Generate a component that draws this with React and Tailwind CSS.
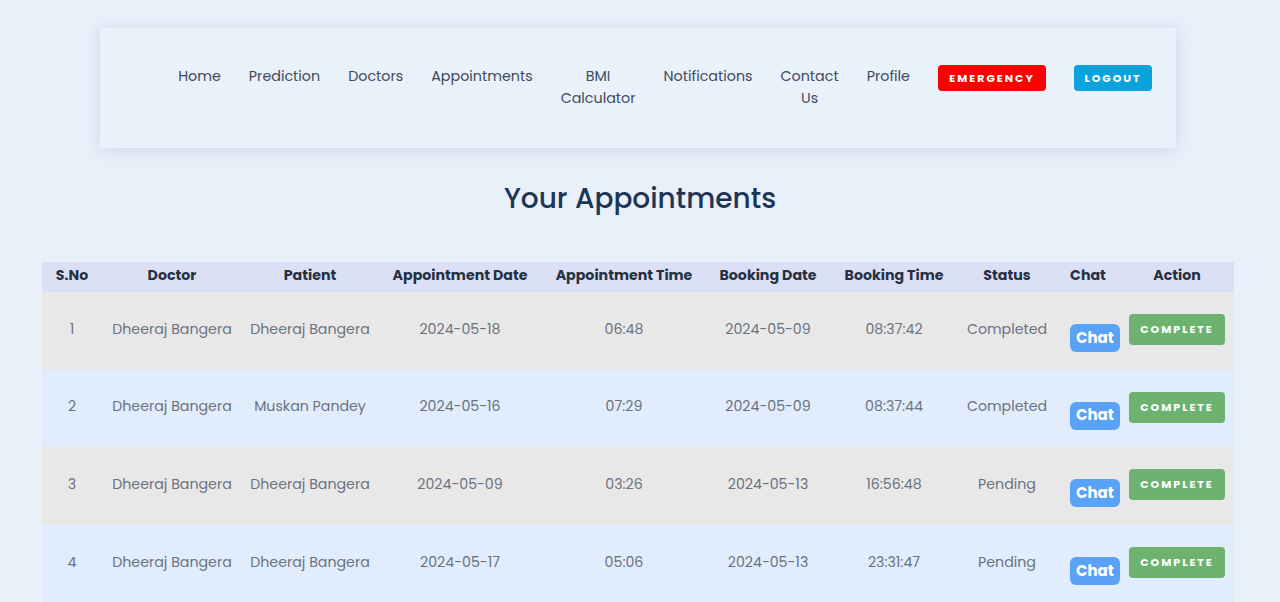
import React from 'react'

const links = ['Home', 'Prediction', 'Doctors', 'Appointments', 'BMI Calculator', 'Notifications', 'Contact Us', 'Profile']

const rows = [
  { id: 1, doctor: 'Dheeraj Bangera', patient: 'Dheeraj Bangera', date: '2024-05-18', time: '06:48', bdate: '2024-05-09', btime: '08:37:42', status: 'Completed' },
  { id: 2, doctor: 'Dheeraj Bangera', patient: 'Muskan Pandey', date: '2024-05-16', time: '07:29', bdate: '2024-05-09', btime: '08:37:44', status: 'Completed' },
  { id: 3, doctor: 'Dheeraj Bangera', patient: 'Dheeraj Bangera', date: '2024-05-09', time: '03:26', bdate: '2024-05-13', btime: '16:56:48', status: 'Pending' },
  { id: 4, doctor: 'Dheeraj Bangera', patient: 'Dheeraj Bangera', date: '2024-05-17', time: '05:06', bdate: '2024-05-13', btime: '23:31:47', status: 'Pending' },
]

const heads = ['S.No', 'Doctor', 'Patient', 'Appointment Date', 'Appointment Time', 'Booking Date', 'Booking Time', 'Status', 'Chat', 'Action']
const widths = [60, 140, 136, 164, 164, 124, 128, 98, 64, 114]

export default function App() {
  return (
    <div className="min-h-screen bg-[#e8f0fa] font-['Poppins','Open_Sans',sans-serif] pt-7">
      <nav className="ml-[100px] w-[1076px] h-[120px] bg-[#e9f1fb] shadow-[0_2px_14px_rgba(120,140,170,0.25)] flex justify-end items-start pt-[37px] pr-6">
        <ul className="flex items-start gap-7 text-[14.3px] leading-[22px] text-[#3f4a5c]">
          {links.map((l) => (
            <li key={l} className={l.includes(' ') ? 'w-min text-center' : ''}>{l}</li>
          ))}
          <li>
            <button className="w-[108px] h-[26px] rounded bg-[#ff0000] text-white text-[11px] font-bold tracking-[2px]">EMERGENCY</button>
          </li>
          <li>
            <button className="w-[78px] h-[26px] rounded bg-[#0aa3dc] text-white text-[11px] font-bold tracking-[2px]">LOGOUT</button>
          </li>
        </ul>
      </nav>

      <h1 className="mt-[30px] text-center text-[28px] font-medium text-[#1e3556]">Your Appointments</h1>

      <table className="mt-[42px] ml-[42px] w-[1192px] table-fixed border-collapse text-center text-[14.2px]">
        <colgroup>
          {widths.map((w, i) => (
            <col key={i} style={{ width: w }} />
          ))}
        </colgroup>
        <thead>
          <tr className="h-[30px] bg-[#dbe0f5] text-[#253042]">
            {heads.map((h) => (
              <th key={h} className="font-bold pb-[2px]">{h}</th>
            ))}
          </tr>
        </thead>
        <tbody className="text-[#6b7280]">
          {rows.map((r, i) => (
            <tr key={r.id} className={`h-[77.7px] ${i % 2 === 0 ? 'bg-[#e8e8e8]' : 'bg-[#e1ecfc]'}`}>
              <td className="pb-[3px]">{r.id}</td>
              <td className="pb-[3px]">{r.doctor}</td>
              <td className="pb-[3px]">{r.patient}</td>
              <td className="pb-[3px]">{r.date}</td>
              <td className="pb-[3px]">{r.time}</td>
              <td className="pb-[3px]">{r.bdate}</td>
              <td className="pb-[3px]">{r.btime}</td>
              <td className="pb-[3px]">{r.status}</td>
              <td>
                <button className="mt-[14px] ml-[14px] w-[50px] h-[28px] rounded-md bg-[#5aa2f6] text-white text-[15px] font-bold">Chat</button>
              </td>
              <td className="pb-[3px]">
                <button className="w-[96px] h-[31px] rounded bg-[#6db36f] text-white text-[11px] font-bold tracking-[2px]">COMPLETE</button>
              </td>
            </tr>
          ))}
        </tbody>
      </table>
    </div>
  )
}
